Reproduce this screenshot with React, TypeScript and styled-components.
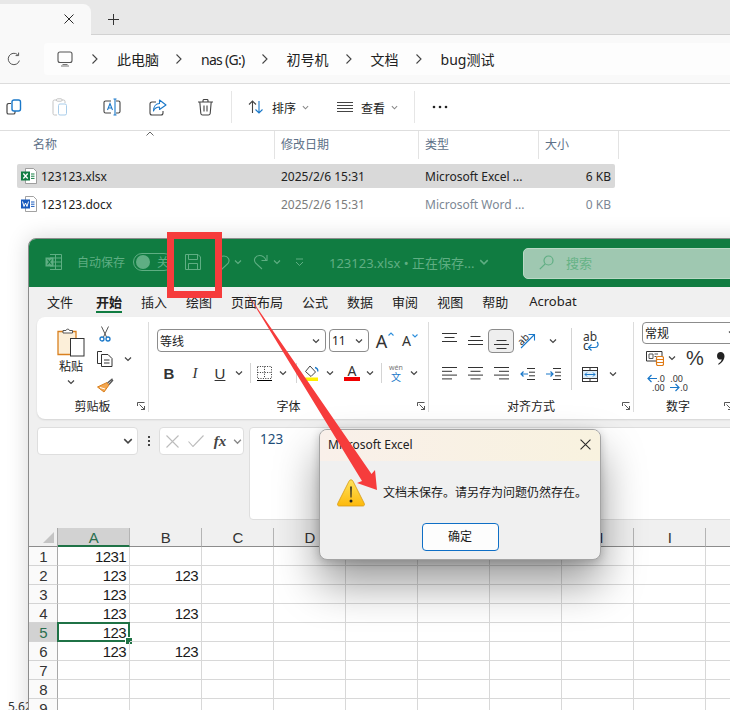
import React from "react";
import styled, { createGlobalStyle } from "styled-components";

const GlobalStyle = createGlobalStyle`
  html, body {
    margin: 0;
    padding: 0;
    background: #fff;
    font-family: "Noto Sans", "Noto Sans CJK SC", sans-serif;
    color: #1b1b1b;
  }
  * { box-sizing: border-box; }
`;

/* ---------- icons ---------- */

const Svg = styled.svg`
  display: block;
  flex-shrink: 0;
`;

const Chevron: React.FC<{ size?: number; color?: string }> = ({ size = 8, color = "#444" }) => (
  <Svg width={size} height={size} viewBox="0 0 8 8" fill="none" stroke={color} strokeWidth="1.2">
    <path d="M1 2.5 4 5.5 7 2.5" />
  </Svg>
);

const Crumb = () => (
  <Svg width="8" height="12" viewBox="0 0 8 12" fill="none" stroke="#444" strokeWidth="1.1">
    <path d="M1.5 1.5 6 6 1.5 10.5" />
  </Svg>
);

const CloseIcon: React.FC<{ size?: number }> = ({ size = 10 }) => (
  <Svg width={size} height={size} viewBox="0 0 10 10" stroke="#2a2a2a" strokeWidth="1">
    <path d="M.5.5l9 9M9.5.5l-9 9" />
  </Svg>
);

const PlusIcon = () => (
  <Svg width="11" height="11" viewBox="0 0 11 11" stroke="#333" strokeWidth="1">
    <path d="M5.5 0v11M0 5.5h11" />
  </Svg>
);

const RefreshIcon = () => (
  <Svg width="14" height="14" viewBox="0 0 14 14" fill="none" stroke="#555" strokeWidth="1">
    <path d="M12.4 8.6A5.7 5.7 0 1 1 10.6 2.6" />
    <path d="M11.6.6v3h-3" />
  </Svg>
);

const PcIcon = () => (
  <Svg width="16" height="16" viewBox="0 0 16 16" fill="none" stroke="#555" strokeWidth="1.1">
    <rect x="1" y="1" width="14" height="10.5" rx="2" />
    <path d="M5.5 13.5h5M4 15h8" stroke="#777" />
  </Svg>
);

const CopyIcon = () => (
  <Svg width="16" height="16" viewBox="0 0 16 16" fill="none" strokeWidth="1.2">
    <path d="M5 4.5H2.6A1.6 1.6 0 0 0 1 6.1v7.3A1.6 1.6 0 0 0 2.6 15h4.8A1.6 1.6 0 0 0 9 13.4V12" stroke="#444" />
    <rect x="6" y="1" width="8.5" height="11" rx="2" stroke="#1a78c9" strokeWidth="1.4" />
  </Svg>
);

const PasteOffIcon = () => (
  <Svg width="16" height="18" viewBox="0 0 16 18" fill="none" strokeWidth="1">
    <path d="M5 2H2.5A1.5 1.5 0 0 0 1 3.5V15.5A1.5 1.5 0 0 0 2.5 17H5M10 2h1.5A1.5 1.5 0 0 1 13 3.5V5" stroke="#c4c4c4" />
    <rect x="4.5" y=".8" width="5.5" height="2.4" rx="1" stroke="#c4c4c4" />
    <rect x="6.5" y="6" width="8" height="11" rx="1.5" stroke="#a9cdea" />
  </Svg>
);

const RenameIcon = () => (
  <Svg width="18" height="18" viewBox="0 0 18 18" fill="none" strokeWidth="1.1">
    <path d="M8 3H2.6A1.6 1.6 0 0 0 1 4.6v8.8A1.6 1.6 0 0 0 2.6 15H8M13 3h2.4A1.6 1.6 0 0 1 17 4.6v8.8a1.6 1.6 0 0 1-1.6 1.6H13" stroke="#444" />
    <path d="M4.5 12 7 5.5 9.5 12M5.4 10h3.2M10.5 1h3M10.5 17h3M12 1v16" stroke="#1a78c9" />
  </Svg>
);

const ShareIcon = () => (
  <Svg width="18" height="17" viewBox="0 0 18 17" fill="none" strokeWidth="1.1">
    <path d="M7 3H3A2 2 0 0 0 1 5v9a2 2 0 0 0 2 2h9a2 2 0 0 0 2-2v-2" stroke="#444" />
    <path d="M10.5 1 17 6l-6.5 4.5V8C7.5 8 5.5 9.5 4.5 12c0-4.5 2.5-7.5 6-7.5z" stroke="#1a78c9" strokeLinejoin="round" />
  </Svg>
);

const TrashIcon = () => (
  <Svg width="15" height="17" viewBox="0 0 15 17" fill="none" stroke="#444" strokeWidth="1.1">
    <path d="M0 3h15M5 3V1.5A1 1 0 0 1 6 .5h3a1 1 0 0 1 1 1V3M1.8 3l1 11.5A1.8 1.8 0 0 0 4.6 16h5.8a1.8 1.8 0 0 0 1.8-1.5l1-11.5M6 6.5v6M9 6.5v6" />
  </Svg>
);

const SortIcon = () => (
  <Svg width="16" height="14" viewBox="0 0 16 14" fill="none" strokeWidth="1.1">
    <path d="M4.5 13V1M1 4.5 4.5 1 8 4.5" stroke="#444" />
    <path d="M11 1v12M7.5 9.5 11 13l3.5-3.5" stroke="#1a78c9" />
  </Svg>
);

const ViewIcon = () => (
  <Svg width="16" height="10" viewBox="0 0 16 10" stroke="#444" strokeWidth="1">
    <path d="M0 .5h16M0 3.5h16M0 6.5h16M0 9.5h16" />
  </Svg>
);

const DotsIcon = () => (
  <Svg width="16" height="4" viewBox="0 0 16 4" fill="#222">
    <circle cx="2" cy="2" r="1.3" />
    <circle cx="8" cy="2" r="1.3" />
    <circle cx="14" cy="2" r="1.3" />
  </Svg>
);

const OfficeFileIcon: React.FC<{ color: string; kind: "x" | "w" }> = ({ color, kind }) => (
  <Svg width="16" height="16" viewBox="0 0 16 16" fill="none">
    <path d="M4.5.5h8l3 3v12h-11z" fill="#fff" stroke="#8a8a8a" strokeWidth=".8" />
    <path d="M10 6h3.5M10 8.2h3.5M10 10.4h3.5" stroke={color} strokeWidth="1" />
    <rect x="0" y="3.5" width="9" height="9" fill={color} />
    {kind === "x" ? (
      <path d="M2.3 5.5 6.7 10.5M6.7 5.5 2.3 10.5" stroke="#fff" strokeWidth="1.3" />
    ) : (
      <path d="M1.5 5.5 3 10.5 4.5 7 6 10.5 7.5 5.5" stroke="#fff" strokeWidth="1" />
    )}
  </Svg>
);

const dim = "#5fae83";

const SheetIcon = () => (
  <Svg width="17" height="16" viewBox="0 0 17 16" fill="none" stroke={dim} strokeWidth="1">
    <path d="M5 .5h11.5v15H5M10.5.5v15M5 4h11.5M5 8h11.5M5 12h11.5" />
    <rect x=".5" y="3.5" width="8" height="9" fill={dim} stroke="none" />
    <path d="M2.5 5.5l4 5M6.5 5.5l-4 5" stroke="#107c41" strokeWidth="1.2" />
  </Svg>
);

const SaveIcon = () => (
  <Svg width="16" height="16" viewBox="0 0 16 16" fill="none" stroke={dim} strokeWidth="1">
    <path d="M.5.5h12.5l2.5 2.5v12.5H.5z" />
    <path d="M3.5.5v5h9v-5M3.5 15.5v-6h9v6" />
  </Svg>
);

const UndoIcon = () => (
  <Svg width="15" height="15" viewBox="0 0 15 15" fill="none" stroke={dim} strokeWidth="1.1">
    <path d="M6.5 14.5 13 8.5C15.5 5 13 1 9 1S3.5 4 3 6" />
  </Svg>
);

const RedoIcon = () => (
  <Svg width="16" height="16" viewBox="0 0 16 16" fill="none" stroke={dim} strokeWidth="1.1">
    <path d="M9 15 2.5 9C0 5.5 2.5 1.5 6.5 1.5c2.8 0 5 1.5 6.5 4.5" />
    <path d="M14 1v5.5H8.5" />
  </Svg>
);

const QuickMoreIcon = () => (
  <Svg width="9" height="9" viewBox="0 0 9 9" fill="none" stroke={dim} strokeWidth="1">
    <path d="M1 1h7M1 4l3.5 3.5L8 4" />
  </Svg>
);

const SearchIcon = () => (
  <Svg width="15" height="15" viewBox="0 0 15 15" fill="none" stroke="#5fae83" strokeWidth="1.2">
    <circle cx="9.5" cy="5.5" r="4.5" />
    <path d="M6.2 8.8.8 14.2" />
  </Svg>
);

const PasteIcon = () => (
  <Svg width="28" height="30" viewBox="0 0 28 30" fill="none">
    <path d="M1 4.5h18v23H1z" fill="#fcefd9" stroke="#d9801f" strokeWidth="1.3" />
    <path d="M6 6V3.5h3a1.8 1.8 0 0 1 3.5 0h3V6z" fill="#fff" stroke="#555" strokeWidth="1" />
    <rect x="13.5" y="11.5" width="13.5" height="17.5" fill="#fff" stroke="#333" strokeWidth="1" />
  </Svg>
);

const ScissorsIcon = () => (
  <Svg width="12" height="16" viewBox="0 0 12 16" fill="none">
    <path d="M2.5 .5 7.5 11M9.5 .5 4.5 11" stroke="#555" strokeWidth="1" />
    <circle cx="3" cy="13" r="2" stroke="#1a78c9" strokeWidth="1.3" />
    <circle cx="9" cy="13" r="2" stroke="#1a78c9" strokeWidth="1.3" />
  </Svg>
);

const DocsIcon = () => (
  <Svg width="16" height="16" viewBox="0 0 16 16" fill="none" stroke="#333" strokeWidth="1">
    <path d="M5 .5H.5v12H4" />
    <path d="M4.5 3.5H11l4 4v8H4.5zM7 9h5.5M7 12h5.5" fill="#fff" />
  </Svg>
);

const BrushIcon = () => (
  <Svg width="17" height="15" viewBox="0 0 17 15" fill="none">
    <path d="M10 4.5 12 7 7 14 .5 9z" fill="#f3a64f" stroke="#d9801f" strokeWidth="1" />
    <path d="M10.5 5 15.5.8M12 6.5 16 2" stroke="#555" strokeWidth="1.3" />
    <path d="M3 9.5 8 11" stroke="#fff" strokeWidth="1" />
  </Svg>
);

const Launcher = () => (
  <Svg width="8" height="8" viewBox="0 0 8 8" fill="none" stroke="#444" strokeWidth=".9">
    <path d="M.5 4V.5H7.5M2.5 2.5l5 5M7.5 4v3.5H4" />
  </Svg>
);

const BordersIcon = () => (
  <Svg width="15" height="15" viewBox="0 0 15 15" fill="none" stroke="#333" strokeWidth="1">
    <path d="M.5.5h14v12H.5zM.5 6.5h14M7.5.5v12" strokeDasharray="1 1.4" />
    <path d="M0 14.5h15" stroke="#000" />
  </Svg>
);

const FillIcon = () => (
  <Svg width="16" height="16" viewBox="0 0 16 16" fill="none">
    <path d="M6 1 11.5 7 7 11.5 1.5 6.5z" stroke="#444" strokeWidth="1" fill="#fff" />
    <path d="M11 2.5c2 .5 3 2 2.8 4" stroke="#1a78c9" strokeWidth="1.3" />
    <rect x="0" y="12.5" width="14" height="3.5" fill="#ffef00" />
  </Svg>
);

const MiniCaret: React.FC<{ down?: boolean }> = ({ down }) => (
  <Svg width="6" height="4" viewBox="0 0 6 4" fill="none" stroke="#2e8fdc" strokeWidth="1.1">
    <path d={down ? "M.5.5 3 3 5.5.5" : "M.5 3.5 3 1 5.5 3.5"} />
  </Svg>
);

// top: y offset of the first line, widths: line lengths from top to bottom
const LinesIcon: React.FC<{ top: number; widths: number[]; align?: "left" | "center" | "right"; gap?: number }> = ({
  top,
  widths,
  align = "center",
  gap = 4.5,
}) => (
  <Svg width="15" height="16" viewBox="0 0 15 16" stroke="#333" strokeWidth="1">
    {widths.map((w, i) => {
      const x = align === "left" ? 0 : align === "right" ? 15 - w : (15 - w) / 2;
      return <path key={i} d={`M${x} ${top + i * gap + 0.5}h${w}`} />;
    })}
  </Svg>
);

const IndentIcon: React.FC<{ out?: boolean }> = ({ out }) => (
  <Svg width="15" height="12" viewBox="0 0 15 12" fill="none">
    <path d="M7 .5h8M9 4.2h6M9 7.8h6M7 11.5h8" stroke="#333" />
    {out ? (
      <path d="M8 6H1M3.5 3.5 1 6l2.5 2.5" stroke="#1a78c9" strokeWidth="1.2" />
    ) : (
      <path d="M0 6h7M4.5 3.5 7 6 4.5 8.5" stroke="#1a78c9" strokeWidth="1.2" />
    )}
  </Svg>
);

const TurnArrowIcon = () => (
  <Svg width="16" height="16" viewBox="0 0 16 16" fill="none" stroke="#1a78c9" strokeWidth="1.1">
    <path d="M1 15 14 2M8.5 1.5H14.5V7.5" />
  </Svg>
);

const WrapArrowIcon = () => (
  <Svg width="12" height="10" viewBox="0 0 12 10" fill="none" stroke="#1a78c9" strokeWidth="1.2">
    <path d="M10 1c2 2 1 5.5-2 5.5H1.5M4.5 3.5l-3 3 3 3" />
  </Svg>
);

const MergeIcon = () => (
  <Svg width="16" height="15" viewBox="0 0 16 15" fill="none">
    <rect x=".5" y=".5" width="15" height="14" fill="#fff" stroke="#333" />
    <path d="M.5 3.5h15M.5 11.5h15M8 .5v3M8 11.5v3" stroke="#333" />
    <rect x="1" y="4" width="14" height="7" fill="#dcedf9" />
    <path d="M3 7.5h10M5 5.5l-2 2 2 2M11 5.5l2 2-2 2" stroke="#1a78c9" />
  </Svg>
);

const CellStylesIcon = () => (
  <Svg width="18" height="16" viewBox="0 0 18 16" fill="none">
    <path d="M.5 1.5h15.5v9.5H.5z" stroke="#333" />
    <path d="M3 4h4v4.5H3zM8.5 4h3.5M8.5 6.5h2" stroke="#555" />
    <rect x="10.5" y="6.5" width="7" height="9" rx="1.5" fill="#fff" stroke="#e07a14" strokeWidth="1.2" />
    <path d="M10.5 9.5h7M10.5 12.5h7" stroke="#e07a14" />
  </Svg>
);

const CommaStyleIcon = () => (
  <Svg width="8" height="13" viewBox="0 0 8 13" fill="#222">
    <path d="M3.6 0C5.9 0 7.500 1.700 7.500 4c0 3.600-2.300 6.900-5.900 8.700l-.5-.8C3.200 10.500 4.500 9 4.800 7.300 4.400 7.500 4 7.600 3.500 7.600 1.400 7.600 0 6.100 0 3.900 0 1.600 1.500 0 3.600 0z" />
  </Svg>
);

const ThinArrow: React.FC<{ left?: boolean }> = ({ left }) => (
  <Svg width="10" height="9" viewBox="0 0 10 9" fill="none" stroke="#1a78c9" strokeWidth="1.2">
    <path d={left ? "M10 4.5H1M4.5 1 1 4.5 4.5 8" : "M0 4.5h9M5.5 1 9 4.5 5.5 8"} />
  </Svg>
);

const CancelIcon = () => (
  <Svg width="13" height="13" viewBox="0 0 13 13" stroke="#bcbcbc" strokeWidth="1.1">
    <path d="M.5.5l12 12M12.5.5l-12 12" />
  </Svg>
);

const ConfirmIcon = () => (
  <Svg width="16" height="12" viewBox="0 0 16 12" fill="none" stroke="#bcbcbc" strokeWidth="1.1">
    <path d="M.5 6.5 5 11.5 15.5.5" />
  </Svg>
);

const WarningIcon = () => (
  <Svg width="28" height="28" viewBox="0 0 28 28">
    <defs>
      <linearGradient id="warn" x1="0" y1="0" x2="0" y2="1">
        <stop offset="0" stopColor="#ffe25c" />
        <stop offset="1" stopColor="#fdb90c" />
      </linearGradient>
    </defs>
    <path d="M14 .8c.9 0 1.5.5 2 1.4l11.3 22.3c.6 1.3 0 2.5-1.5 2.5H2.2c-1.5 0-2.1-1.2-1.5-2.5L12 2.2c.5-.9 1.1-1.4 2-1.4z" fill="url(#warn)" stroke="#d79a16" strokeWidth=".8" />
    <path d="M13.2 7.5h1.6l-.3 11h-1z" fill="#222" />
    <circle cx="14" cy="22" r="1.5" fill="#222" />
  </Svg>
);

/* ---------- page ---------- */

const Page = styled.div`
  position: relative;
  width: 730px;
  height: 710px;
  overflow: hidden;
  background: #fff;
`;

const TabStrip = styled.div`
  display: flex;
  align-items: flex-end;
  height: 35px;
  padding-top: 4px;
  background: #e8e8e8;
  border-bottom: 1px solid #d2d2d2;
`;

const ActiveTab = styled.div`
  display: flex;
  align-items: center;
  justify-content: flex-end;
  width: 91px;
  height: 31px;
  margin-bottom: -1px;
  padding: 0 17px 2px 0;
  background: #f9f9f9;
  border-top-right-radius: 8px;
`;

const NewTab = styled.div`
  display: flex;
  align-items: center;
  justify-content: center;
  width: 44px;
  height: 30px;
`;

const AddressRow = styled.div`
  display: flex;
  align-items: center;
  height: 49px;
  background: #f9f9f9;
  border-bottom: 1px solid #dcdcdc;
`;

const RefreshSlot = styled.div`
  display: flex;
  justify-content: center;
  width: 44px;
  padding-right: 16px;
`;

const AddressBox = styled.div`
  display: flex;
  align-items: center;
  gap: 16px;
  flex: 1;
  height: 32px;
  padding-left: 13px;
  background: #fdfdfd;
  border-radius: 4px 0 0 4px;
  font-size: 14px;
  color: #222;
`;

const HomeSpot = styled.div`
  margin-right: 2px;
`;

const CrumbSpot = styled.div`
  margin-right: 2px;
`;

const CrumbText = styled.span<{ $tight?: boolean }>`
  letter-spacing: ${({ $tight }) => ($tight ? "-0.7px" : "0")};
`;

const Toolbar = styled.div`
  display: flex;
  align-items: center;
  height: 47px;
  background: #fff;
  border-bottom: 1px solid #dedede;
`;

const ToolSlot = styled.div<{ $w: number }>`
  display: flex;
  align-items: center;
  justify-content: center;
  width: ${({ $w }) => $w}px;
  font-size: 12px;
  color: #222;
`;

const ToolLabelled = styled.div<{ $w: number; $pad: number }>`
  display: flex;
  align-items: center;
  gap: 8px;
  width: ${({ $w }) => $w}px;
  padding-left: ${({ $pad }) => $pad}px;
  font-size: 12px;
  color: #222;
`;

const ToolLabel = styled.span`
  padding-top: 2px;
`;

const ToolCaret = styled.div`
  margin-left: -2px;
`;

const ToolDivider = styled.div<{ $ml?: number }>`
  width: 1px;
  height: 32px;
  margin-left: ${({ $ml }) => $ml || 0}px;
  background: #e6e6e6;
`;

const ListHeader = styled.div`
  position: relative;
  display: flex;
  height: 28px;
  color: #5d7087;
  font-size: 12px;
`;

const SortCaret = styled.div`
  position: absolute;
  left: 146px;
  top: 0;
`;

const HeaderCell = styled.div<{ $w: number; $pad: number }>`
  width: ${({ $w }) => $w}px;
  padding-left: ${({ $pad }) => $pad}px;
  border-right: 1px solid #e3e3e3;
  line-height: 27px;
`;

const FileList = styled.div`
  display: flex;
  flex-direction: column;
  gap: 4px;
  width: 598px;
  margin: 5px 0 0 17px;
`;

const FileRow = styled.div<{ $selected?: boolean }>`
  display: flex;
  align-items: center;
  height: 24px;
  padding-left: 4px;
  border-radius: 2px;
  font-size: 12px;
  background: ${({ $selected }) => ($selected ? "#d9d9d9" : "transparent")};
`;

const FileName = styled.div`
  width: 260px;
  display: flex;
  align-items: center;
  gap: 4px;
  color: #1c1c1c;
`;

const FileCell = styled.div<{ $w: number; $muted?: string; $right?: boolean }>`
  width: ${({ $w }) => $w}px;
  color: ${({ $muted }) => $muted || "#222"};
  text-align: ${({ $right }) => ($right ? "right" : "left")};
  white-space: nowrap;
`;

const StrayText = styled.div`
  position: absolute;
  left: 8px;
  top: 698px;
  font-size: 12px;
  color: #333;
`;

/* ---------- excel window ---------- */

const ExcelWindow = styled.div`
  position: absolute;
  left: 28px;
  top: 238px;
  width: 780px;
  height: 500px;
  background: #f0f0f0;
  border: 1px solid #8c8c8c;
  border-radius: 8px 0 0 0;
  box-shadow: 0 0 22px rgba(0, 0, 0, 0.16);
  overflow: hidden;
`;

const TitleBar = styled.div`
  display: flex;
  align-items: center;
  height: 48px;
  padding-bottom: 2px;
  background: #107c41;
  color: ${dim};
  font-size: 12px;
`;

const TitleSlot = styled.div<{ $w: number }>`
  display: flex;
  align-items: center;
  justify-content: center;
  flex-shrink: 0;
  width: ${({ $w }) => $w}px;
`;

const AutoSaveLabel = styled.span`
  flex-shrink: 0;
  width: 56px;
  white-space: nowrap;
`;

const Toggle = styled.div`
  display: flex;
  align-items: center;
  justify-content: space-between;
  flex-shrink: 0;
  width: 40px;
  height: 18px;
  padding: 0 3px 0 2px;
  border: 1px solid ${dim};
  border-radius: 9px;
`;

const ToggleKnob = styled.div`
  width: 14px;
  height: 14px;
  border-radius: 50%;
  background: ${dim};
`;

const DocTitle = styled.div`
  display: flex;
  align-items: center;
  gap: 4px;
  flex-shrink: 0;
  width: 194px;
  white-space: nowrap;
  font-size: 13px;
`;

const SearchBox = styled.div`
  display: flex;
  align-items: center;
  gap: 12px;
  flex-shrink: 0;
  width: 300px;
  height: 31px;
  margin-top: 2px;
  padding: 0 0 2px 15px;
  background: #9fc8b1;
  border: 1px solid #b9d9c6;
  border-radius: 5px;
  font-size: 13px;
  color: #66b386;
`;

const MenuBar = styled.div`
  display: flex;
  align-items: center;
  gap: 19px;
  height: 30px;
  padding: 0 0 2px 18px;
  font-size: 13px;
  color: #222;
`;

const MenuItem = styled.div<{ $active?: boolean }>`
  position: relative;
  font-weight: ${({ $active }) => ($active ? 700 : 400)};
  margin: ${({ $active }) => ($active ? "0 0 0 4px" : "0")};
  &:last-child {
    margin-left: 2px;
  }
  &::after {
    content: "";
    display: ${({ $active }) => ($active ? "block" : "none")};
    position: absolute;
    left: 0;
    right: 0;
    bottom: -2px;
    height: 2px;
    background: #107c41;
  }
`;

const Ribbon = styled.div`
  display: flex;
  height: 102px;
  margin-left: 8px;
  padding-top: 5px;
  background: #fff;
  border-radius: 8px 0 0 8px;
  box-shadow: 0 1px 2px rgba(0, 0, 0, 0.12);
`;

const Group = styled.div<{ $w: number; $last?: boolean }>`
  display: flex;
  flex-direction: column;
  flex-shrink: 0;
  width: ${({ $w }) => $w}px;
  height: 90px;
  border-right: ${({ $last }) => ($last ? "none" : "1px solid #dcdcdc")};
`;

const GroupBody = styled.div<{ $pad?: number }>`
  display: flex;
  flex: 1;
  padding-left: ${({ $pad }) => $pad || 0}px;
`;

const GroupFooter = styled.div`
  position: relative;
  height: 14px;
  line-height: 18px;
  font-size: 12px;
  text-align: center;
  color: #222;
`;

const LauncherSpot = styled.div<{ $right: number }>`
  position: absolute;
  right: ${({ $right }) => $right}px;
  top: 4px;
`;

const PasteColumn = styled.div`
  display: flex;
  flex-direction: column;
  align-items: center;
  width: 46px;
  margin-left: 11px;
  padding-top: 5px;
  font-size: 12px;
  gap: 1px;
`;

const PasteLabel = styled.div`
  line-height: 18px;
  margin-bottom: 1px;
`;

const ClipColumn = styled.div`
  display: flex;
  flex-direction: column;
`;

const Row = styled.div<{ $h?: number; $top?: number }>`
  display: flex;
  align-items: center;
  flex-shrink: 0;
  height: ${({ $h }) => $h || 24}px;
  margin-top: ${({ $top }) => $top || 0}px;
`;

const Slot = styled.div<{ $w: number; $pressed?: boolean }>`
  display: flex;
  align-items: center;
  justify-content: center;
  flex-shrink: 0;
  width: ${({ $w }) => $w}px;
  height: 100%;
  border-radius: 4px;
  border: ${({ $pressed }) => ($pressed ? "1px solid #8c8c8c" : "none")};
  background: ${({ $pressed }) => ($pressed ? "#eeeeee" : "transparent")};
`;

const Column = styled.div`
  display: flex;
  flex-direction: column;
`;

const SelectBox = styled.div<{ $w: number; $h?: number; $ml?: number }>`
  display: flex;
  align-items: center;
  justify-content: space-between;
  flex-shrink: 0;
  width: ${({ $w }) => $w}px;
  height: ${({ $h }) => $h || 23}px;
  margin-left: ${({ $ml }) => $ml || 0}px;
  padding: 0 5px 0 2px;
  background: #fff;
  border: 1px solid #8c8c8c;
  border-radius: 4px;
  font-size: 12px;
  color: #222;
`;

const RibbonSep = styled.div<{ $h?: number }>`
  width: 1px;
  height: ${({ $h }) => $h || 20}px;
  background: #d4d4d4;
`;

const AlignDivider = styled.div`
  width: 1px;
  height: 62px;
  margin: 6px 0 0 5px;
  background: #d4d4d4;
`;

const GrowLetter = styled.div<{ $size: number }>`
  display: flex;
  gap: 1px;
  align-items: flex-start;
  font-size: ${({ $size }) => $size}px;
  line-height: 1;
  color: #333;
`;

const StyleLetter = styled.span<{ $kind: "b" | "i" | "u" }>`
  font-family: ${({ $kind }) => ($kind === "i" ? '"Liberation Serif", serif' : '"Liberation Sans", sans-serif')};
  font-size: 15px;
  color: #333;
  font-weight: ${({ $kind }) => ($kind === "b" ? 700 : 400)};
  font-style: ${({ $kind }) => ($kind === "i" ? "italic" : "normal")};
  text-decoration: ${({ $kind }) => ($kind === "u" ? "underline" : "none")};
`;

const FontColor = styled.div`
  width: 16px;
  font-size: 14px;
  line-height: 12px;
  text-align: center;
  color: #333;
  border-bottom: 4px solid #f00000;
`;

const WenStack = styled.div`
  display: flex;
  flex-direction: column;
  align-items: center;
  font-size: 7px;
  line-height: 8px;
  color: #777;
`;

const WenChar = styled.span`
  font-size: 10px;
  line-height: 10px;
  color: #1a78c9;
`;

const Rotated = styled.span`
  position: absolute;
  left: -1px;
  top: -1px;
  font-size: 10px;
  transform: rotate(-45deg);
  color: #333;
`;

const OrientBox = styled.div`
  position: relative;
  width: 18px;
  height: 16px;
`;

const WrapStack = styled.div`
  position: relative;
  width: 14px;
  font-size: 12px;
  line-height: 9px;
  color: #333;
`;

const WrapArrowSpot = styled.div`
  position: absolute;
  right: 0;
  bottom: 0;
`;

const WrapArrowOffset = styled(WrapArrowSpot)`
  right: -2px;
  bottom: -1px;
`;

const Percent = styled.span`
  font-family: "Liberation Sans", sans-serif;
  font-size: 20px;
  color: #333;
`;

const DecimalStack = styled.div<{ $right?: boolean }>`
  display: flex;
  flex-direction: column;
  align-items: ${({ $right }) => ($right ? "flex-start" : "flex-end")};
  font-size: 9px;
  line-height: 9px;
  color: #333;
`;

const DecimalLine = styled.div`
  display: flex;
  align-items: center;
`;

/* ---------- formula bar ---------- */

const FormulaBar = styled.div`
  display: flex;
  height: 93px;
  margin: 8px 0;
  padding-left: 8px;
`;

const FieldBox = styled.div<{ $w: number }>`
  display: flex;
  align-items: center;
  flex-shrink: 0;
  width: ${({ $w }) => $w}px;
  height: 28px;
  background: #fff;
  border: 1px solid #dedede;
  border-radius: 4px;
`;

const NameSpacer = styled.div`
  flex: 1;
`;

const GripSlot = styled.div`
  display: flex;
  flex-direction: column;
  align-items: center;
  justify-content: center;
  gap: 2px;
  width: 21px;
  height: 28px;
`;

const GripDot = styled.div`
  width: 2px;
  height: 2px;
  background: #444;
`;

const FxMark = styled.span`
  font-family: "Liberation Serif", serif;
  font-style: italic;
  font-weight: 700;
  font-size: 15px;
  color: #444;
`;

const FormulaInput = styled.div`
  flex: 1;
  margin-left: 5px;
  padding: 2px 0 0 10px;
  background: #fff;
  border: 1px solid #dedede;
  border-radius: 4px;
  font-size: 13.5px;
  color: #1f4e79;
`;

/* ---------- sheet ---------- */

const Sheet = styled.div`
  display: grid;
  grid-template-columns: 29px repeat(10, 72px);
  grid-auto-rows: 19px;
  background: #fff;
  font-family: "Liberation Sans", sans-serif;
  font-size: 15px;
  letter-spacing: -0.6px;
  color: #1a1a1a;
`;

const Corner = styled.div`
  display: flex;
  align-items: flex-end;
  justify-content: flex-end;
  padding: 0 3px 3px 0;
  background: #f0f0f0;
  border-right: 1px solid #a8a8a8;
  border-bottom: 1px solid #8c8c8c;
`;

const CornerMark = styled.div`
  width: 0;
  height: 0;
  border-style: solid;
  border-width: 0 0 11px 11px;
  border-color: transparent transparent #c4c4c4 transparent;
`;

const ColHead = styled.div<{ $active?: boolean }>`
  text-align: center;
  line-height: 20px;
  background: ${({ $active }) => ($active ? "#d2d2d2" : "#f0f0f0")};
  color: ${({ $active }) => ($active ? "#2a6e4e" : "#333")};
  border-right: 1px solid #b4b4b4;
  border-bottom: ${({ $active }) => ($active ? "2px solid #1f7246" : "1px solid #8c8c8c")};
`;

const RowHead = styled.div<{ $active?: boolean }>`
  text-align: center;
  line-height: 20px;
  background: ${({ $active }) => ($active ? "#d2d2d2" : "#fafafa")};
  color: ${({ $active }) => ($active ? "#2a6e4e" : "#333")};
  border-right: 1px solid #a8a8a8;
  border-bottom: 1px solid #d4d4d4;
`;

const Cell = styled.div<{ $current?: boolean }>`
  position: relative;
  padding-right: 3px;
  text-align: right;
  line-height: 20px;
  border-right: 1px solid #d8d8d8;
  border-bottom: 1px solid #d8d8d8;
  &::before {
    content: "";
    display: ${({ $current }) => ($current ? "block" : "none")};
    position: absolute;
    inset: -1px;
    border: 2px solid #1f7246;
  }
  &::after {
    content: "";
    display: ${({ $current }) => ($current ? "block" : "none")};
    position: absolute;
    right: -3px;
    bottom: -3px;
    width: 6px;
    height: 6px;
    background: #1f7246;
    border: 1px solid #fff;
    border-width: 1px 0 0 1px;
  }
`;

/* ---------- dialog ---------- */

const Dialog = styled.div`
  position: absolute;
  left: 319px;
  top: 429px;
  width: 282px;
  height: 131px;
  display: flex;
  flex-direction: column;
  background: #f0f0f0;
  border: 1px solid #a4a4a4;
  border-radius: 8px;
  box-shadow: 0 24px 44px rgba(0, 0, 0, 0.4), 0 2px 10px rgba(0, 0, 0, 0.2);
  overflow: hidden;
`;

const DialogTitle = styled.div`
  display: flex;
  align-items: center;
  justify-content: space-between;
  flex-shrink: 0;
  height: 31px;
  padding: 0 9px 2px 8px;
  background: linear-gradient(90deg, #f9f0ea, #f8f2df);
  font-size: 12px;
  color: #222;
`;

const DialogBody = styled.div`
  display: flex;
  align-items: center;
  gap: 18px;
  padding: 18px 0 0 17px;
  font-size: 12px;
  color: #1a1a1a;
  white-space: nowrap;
`;

const DialogText = styled.span`
  padding-bottom: 2px;
`;

const DialogFooter = styled.div`
  display: flex;
  justify-content: center;
  margin-top: 16px;
`;

const OkButton = styled.div`
  width: 77px;
  height: 28px;
  line-height: 25px;
  text-align: center;
  background: #fdfdfd;
  border: 1.5px solid #0f6fc6;
  border-radius: 4px;
  font-size: 12px;
  color: #1a1a1a;
`;

/* ---------- annotation ---------- */

const Highlight = styled.div`
  position: absolute;
  left: 167px;
  top: 232px;
  width: 55px;
  height: 66px;
  border: 7px solid #f63c3c;
`;

const ArrowLayer = styled.svg`
  position: absolute;
  left: 0;
  top: 0;
  pointer-events: none;
`;

const crumbs = ["此电脑", "nas (G:)", "初号机", "文档", "bug测试"];
const menus = ["插入", "绘图", "页面布局", "公式", "数据", "审阅", "视图", "帮助", "Acrobat"];
const columns = ["A", "B", "C", "D", "E", "F", "G", "H", "I", "J"];
const sheetRows: [string, string][] = [
  ["1231", ""],
  ["123", "123"],
  ["123", ""],
  ["123", "123"],
  ["123", ""],
  ["123", "123"],
  ["", ""],
  ["", ""],
  ["", ""],
];

const App: React.FC = () => {
  return (
    <Page>
      <GlobalStyle />

      <TabStrip>
        <ActiveTab>
          <CloseIcon />
        </ActiveTab>
        <NewTab>
          <PlusIcon />
        </NewTab>
      </TabStrip>

      <AddressRow>
        <RefreshSlot>
          <RefreshIcon />
        </RefreshSlot>
        <AddressBox>
          <HomeSpot><PcIcon /></HomeSpot>
          {crumbs.map((c) => (
            <React.Fragment key={c}>
              <CrumbSpot><Crumb /></CrumbSpot>
              <CrumbText $tight={c.startsWith("nas")}>{c}</CrumbText>
            </React.Fragment>
          ))}
        </AddressBox>
      </AddressRow>

      <Toolbar>
        <ToolSlot $w={27}><CopyIcon /></ToolSlot>
        <ToolSlot $w={66}><PasteOffIcon /></ToolSlot>
        <ToolSlot $w={37}><RenameIcon /></ToolSlot>
        <ToolSlot $w={55}><ShareIcon /></ToolSlot>
        <ToolSlot $w={40}><TrashIcon /></ToolSlot>
        <ToolDivider $ml={6} />
        <ToolLabelled $w={83} $pad={16}>
          <SortIcon />
          <ToolLabel>排序</ToolLabel>
          <ToolCaret><Chevron size={7} color="#888" /></ToolCaret>
        </ToolLabelled>
        <ToolLabelled $w={99} $pad={22}>
          <ViewIcon />
          <ToolLabel>查看</ToolLabel>
          <ToolCaret><Chevron size={7} color="#888" /></ToolCaret>
        </ToolLabelled>
        <ToolDivider />
        <ToolSlot $w={49}><DotsIcon /></ToolSlot>
      </Toolbar>

      <ListHeader>
        <SortCaret>
          <Svg width="8" height="5" viewBox="0 0 8 5" fill="none" stroke="#666" strokeWidth="1">
            <path d="M.5 4.5 4 1l3.5 3.5" />
          </Svg>
        </SortCaret>
        <HeaderCell $w={275} $pad={33}>名称</HeaderCell>
        <HeaderCell $w={144} $pad={6}>修改日期</HeaderCell>
        <HeaderCell $w={120} $pad={6}>类型</HeaderCell>
        <HeaderCell $w={80} $pad={6}>大小</HeaderCell>
      </ListHeader>

      <FileList>
        <FileRow $selected>
          <FileName>
            <OfficeFileIcon color="#107c41" kind="x" />
            123123.xlsx
          </FileName>
          <FileCell $w={144}>2025/2/6 15:31</FileCell>
          <FileCell $w={103}>Microsoft Excel ...</FileCell>
          <FileCell $w={83} $right>6 KB</FileCell>
        </FileRow>
        <FileRow>
          <FileName>
            <OfficeFileIcon color="#185abd" kind="w" />
            123123.docx
          </FileName>
          <FileCell $w={144} $muted="#7c7c7c">2025/2/6 15:31</FileCell>
          <FileCell $w={106} $muted="#7c8794">Microsoft Word ...</FileCell>
          <FileCell $w={80} $muted="#7c8794" $right>0 KB</FileCell>
        </FileRow>
      </FileList>

      <StrayText>5.62</StrayText>

      <ExcelWindow>
        <TitleBar>
          <TitleSlot $w={48}><SheetIcon /></TitleSlot>
          <AutoSaveLabel>自动保存</AutoSaveLabel>
          <Toggle>
            <ToggleKnob />
            <span>关</span>
          </Toggle>
          <TitleSlot $w={12} />
          <TitleSlot $w={16}><SaveIcon /></TitleSlot>
          <TitleSlot $w={14} />
          <TitleSlot $w={15}><UndoIcon /></TitleSlot>
          <TitleSlot $w={4} />
          <TitleSlot $w={8}><Chevron size={8} color={dim} /></TitleSlot>
          <TitleSlot $w={5} />
          <TitleSlot $w={28}><RedoIcon /></TitleSlot>
          <TitleSlot $w={4}><Chevron size={8} color={dim} /></TitleSlot>
          <TitleSlot $w={40}><QuickMoreIcon /></TitleSlot>
          <TitleSlot $w={10} />
          <DocTitle>
            <span>123123.xlsx • 正在保存...</span>
            <Chevron size={10} color={dim} />
          </DocTitle>
          <SearchBox>
            <SearchIcon />
            <span>搜索</span>
          </SearchBox>
        </TitleBar>

        <MenuBar>
          <MenuItem>文件</MenuItem>
          <MenuItem $active>开始</MenuItem>
          {menus.map((m) => (
            <MenuItem key={m}>{m}</MenuItem>
          ))}
        </MenuBar>

        <Ribbon>
          <Group $w={112}>
            <GroupBody>
              <PasteColumn>
                <PasteIcon />
                <PasteLabel>粘贴</PasteLabel>
                <Chevron />
              </PasteColumn>
              <ClipColumn>
                <Row><Slot $w={22}><ScissorsIcon /></Slot></Row>
                <Row $h={26}>
                  <Slot $w={22}><DocsIcon /></Slot>
                  <Slot $w={24}><Chevron /></Slot>
                </Row>
                <Row $h={26}><Slot $w={22}><BrushIcon /></Slot></Row>
              </ClipColumn>
            </GroupBody>
            <GroupFooter>
              剪贴板
              <LauncherSpot $right={3}><Launcher /></LauncherSpot>
            </GroupFooter>
          </Group>

          <Group $w={280}>
            <GroupBody $pad={8}>
              <Column>
                <Row $h={23} $top={7}>
                  <SelectBox $w={169}>
                    <span>等线</span>
                    <Chevron />
                  </SelectBox>
                  <SelectBox $w={40} $ml={3}>
                    <span>11</span>
                    <Chevron />
                  </SelectBox>
                  <Slot $w={32}>
                    <GrowLetter $size={18}>A<MiniCaret /></GrowLetter>
                  </Slot>
                  <Slot $w={18}>
                    <GrowLetter $size={14}>A<MiniCaret down /></GrowLetter>
                  </Slot>
                </Row>
                <Row $top={9}>
                  <Slot $w={24}><StyleLetter $kind="b">B</StyleLetter></Slot>
                  <Slot $w={28}><StyleLetter $kind="i">I</StyleLetter></Slot>
                  <Slot $w={22}><StyleLetter $kind="u">U</StyleLetter></Slot>
                  <Slot $w={16}><Chevron /></Slot>
                  <Slot $w={6}><RibbonSep /></Slot>
                  <Slot $w={22}><BordersIcon /></Slot>
                  <Slot $w={16}><Chevron /></Slot>
                  <Slot $w={10}><RibbonSep /></Slot>
                  <Slot $w={22}><FillIcon /></Slot>
                  <Slot $w={14}><Chevron /></Slot>
                  <Slot $w={30}><FontColor>A</FontColor></Slot>
                  <Slot $w={6}><Chevron /></Slot>
                  <Slot $w={16}><RibbonSep /></Slot>
                  <Slot $w={14}>
                    <WenStack>
                      wén
                      <WenChar>文</WenChar>
                    </WenStack>
                  </Slot>
                  <Slot $w={22}><Chevron /></Slot>
                </Row>
              </Column>
            </GroupBody>
            <GroupFooter>
              字体
              <LauncherSpot $right={3}><Launcher /></LauncherSpot>
            </GroupFooter>
          </Group>

          <Group $w={205}>
            <GroupBody $pad={7}>
              <Column>
                <Row $top={7}>
                  <Slot $w={26}><LinesIcon top={0} widths={[15, 10, 15]} gap={4} /></Slot>
                  <Slot $w={26}><LinesIcon top={3} widths={[10, 15, 15]} gap={4} /></Slot>
                  <Slot $w={26} $pressed><LinesIcon top={7} widths={[10, 15, 10]} gap={4} /></Slot>
                  <Slot $w={26}>
                    <OrientBox>
                      <Rotated>ab</Rotated>
                      <WrapArrowSpot><TurnArrowIcon /></WrapArrowSpot>
                    </OrientBox>
                  </Slot>
                  <Slot $w={26}><Chevron /></Slot>
                </Row>
                <Row $top={9}>
                  <Slot $w={26}><LinesIcon top={1} widths={[15, 10, 15, 10]} align="left" gap={3.8} /></Slot>
                  <Slot $w={26}><LinesIcon top={1} widths={[15, 10, 15, 10]} gap={3.8} /></Slot>
                  <Slot $w={26}><LinesIcon top={1} widths={[15, 10, 15, 10]} align="right" gap={3.8} /></Slot>
                  <Slot $w={26}><IndentIcon out /></Slot>
                  <Slot $w={26}><IndentIcon /></Slot>
                </Row>
              </Column>
              <AlignDivider />
              <Column>
                <Row $top={7}>
                  <Slot $w={36}>
                    <WrapStack>
                      ab
                      <br />
                      c
                      <WrapArrowOffset><WrapArrowIcon /></WrapArrowOffset>
                    </WrapStack>
                  </Slot>
                </Row>
                <Row $top={9}>
                  <Slot $w={36}><MergeIcon /></Slot>
                  <Slot $w={10}><Chevron /></Slot>
                </Row>
              </Column>
            </GroupBody>
            <GroupFooter>
              对齐方式
              <LauncherSpot $right={3}><Launcher /></LauncherSpot>
            </GroupFooter>
          </Group>

          <Group $w={88} $last>
            <GroupBody $pad={8}>
              <Column>
                <SelectBox $w={100} $h={22}>
                  <span>常规</span>
                  <Chevron />
                </SelectBox>
                <Row $top={2}>
                  <Slot $w={26}><CellStylesIcon /></Slot>
                  <Slot $w={8}><Chevron /></Slot>
                  <Slot $w={38}><Percent>%</Percent></Slot>
                  <Slot $w={14}><CommaStyleIcon /></Slot>
                </Row>
                <Row $top={1}>
                  <Slot $w={28}>
                    <DecimalStack>
                      <DecimalLine><ThinArrow left />.0</DecimalLine>
                      .00
                    </DecimalStack>
                  </Slot>
                  <Slot $w={18}>
                    <DecimalStack $right>
                      .00
                      <DecimalLine><ThinArrow />.0</DecimalLine>
                    </DecimalStack>
                  </Slot>
                </Row>
              </Column>
            </GroupBody>
            <GroupFooter>
              数字
              <LauncherSpot $right={-10}><Launcher /></LauncherSpot>
            </GroupFooter>
          </Group>
        </Ribbon>

        <FormulaBar>
          <FieldBox $w={101}>
            <NameSpacer />
            <Slot $w={18}><Chevron size={10} /></Slot>
          </FieldBox>
          <GripSlot>
            <GripDot />
            <GripDot />
            <GripDot />
          </GripSlot>
          <FieldBox $w={85}>
            <Slot $w={24}><CancelIcon /></Slot>
            <Slot $w={24}><ConfirmIcon /></Slot>
            <Slot $w={24}><FxMark>fx</FxMark></Slot>
            <Slot $w={10}><Chevron size={9} color="#888" /></Slot>
          </FieldBox>
          <FormulaInput>123</FormulaInput>
        </FormulaBar>

        <Sheet>
          <Corner><CornerMark /></Corner>
          {columns.map((c) => (
            <ColHead key={c} $active={c === "A"}>{c}</ColHead>
          ))}
          {sheetRows.map((row, i) => (
            <React.Fragment key={i}>
              <RowHead $active={i === 4}>{i + 1}</RowHead>
              {columns.map((c, j) => (
                <Cell key={c} $current={i === 4 && j === 0}>{row[j] || ""}</Cell>
              ))}
            </React.Fragment>
          ))}
        </Sheet>
      </ExcelWindow>

      <Dialog>
        <DialogTitle>
          <span>Microsoft Excel</span>
          <CloseIcon size={11} />
        </DialogTitle>
        <DialogBody>
          <WarningIcon />
          <DialogText>文档未保存。请另存为问题仍然存在。</DialogText>
        </DialogBody>
        <DialogFooter>
          <OkButton>确定</OkButton>
        </DialogFooter>
      </Dialog>

      <Highlight />
      <ArrowLayer width="730" height="710" viewBox="0 0 730 710">
        <path d="M247 293 371.5 474 375 470 377 490 357 483 362 481Z" fill="#f63c3c" />
      </ArrowLayer>
    </Page>
  );
};

export default App;
